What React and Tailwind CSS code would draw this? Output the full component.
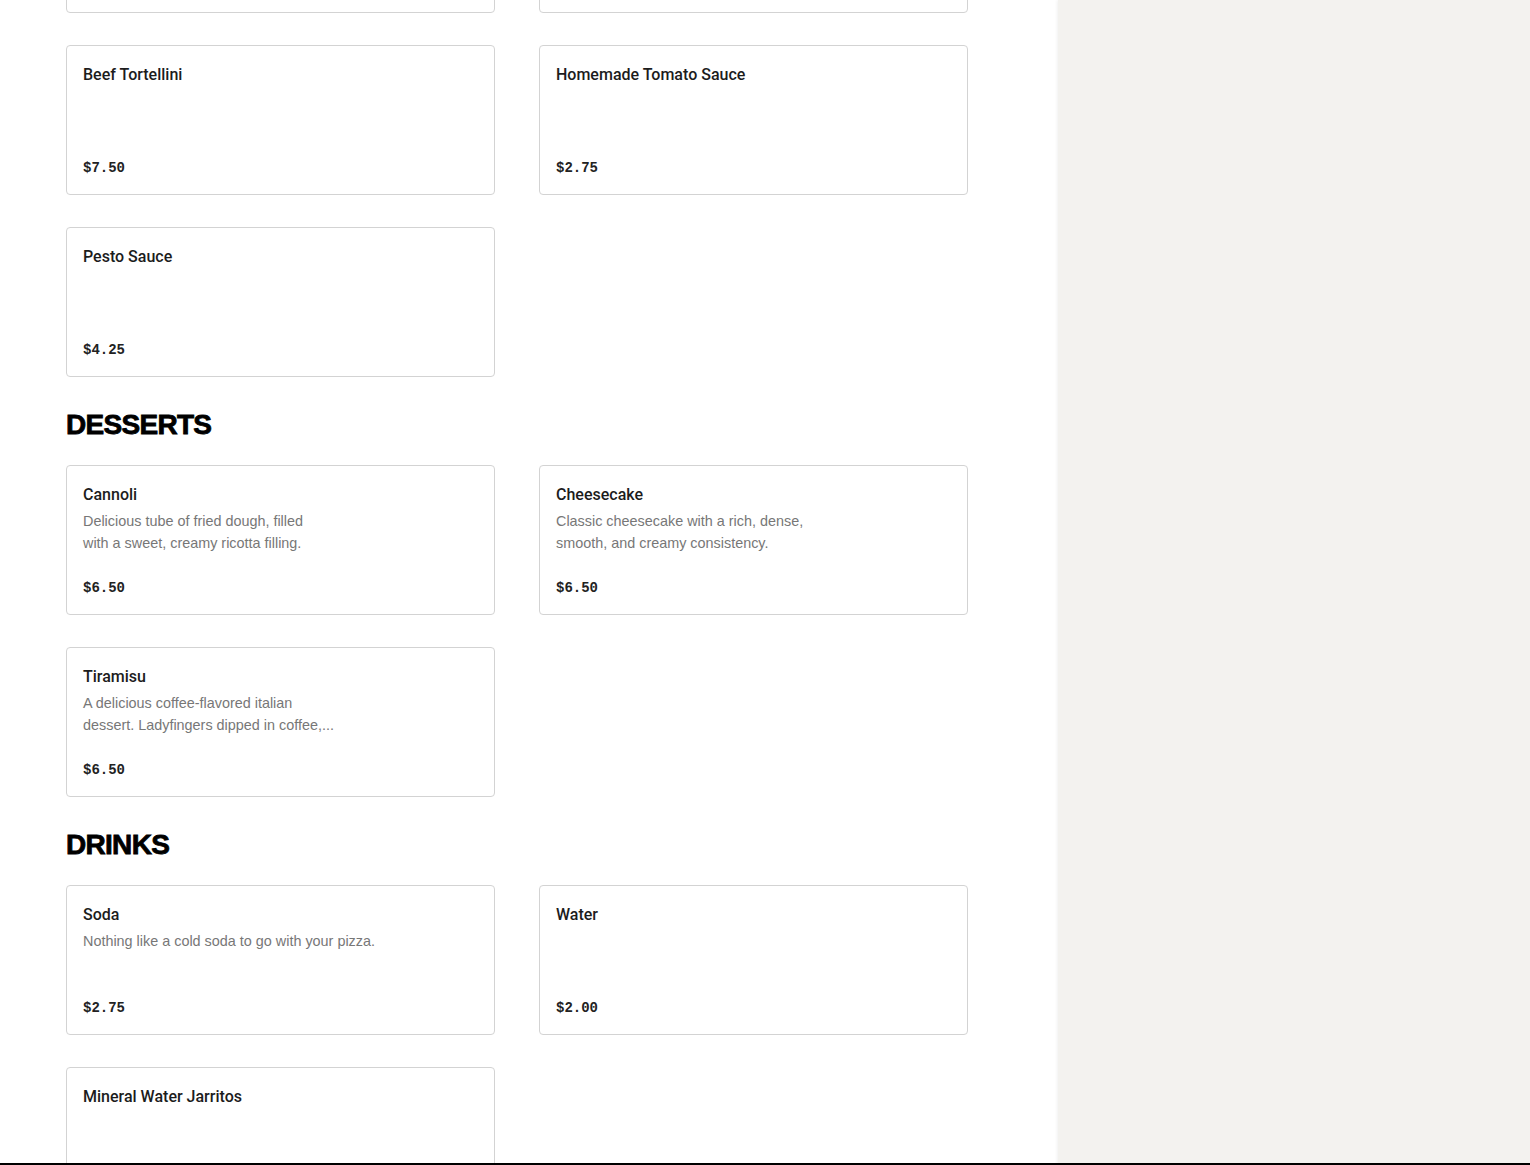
const sections = [
  {
    title: null,
    items: [
      { name: 'Spaghetti', price: '$7.50' },
      { name: 'Fettuccine', price: '$7.50' },
      { name: 'Beef Tortellini', price: '$7.50' },
      { name: 'Homemade Tomato Sauce', price: '$2.75' },
      { name: 'Pesto Sauce', price: '$4.25' },
    ],
  },
  {
    title: 'DESSERTS',
    items: [
      {
        name: 'Cannoli',
        desc: ['Delicious tube of fried dough, filled', 'with a sweet, creamy ricotta filling.'],
        price: '$6.50',
      },
      {
        name: 'Cheesecake',
        desc: ['Classic cheesecake with a rich, dense,', 'smooth, and creamy consistency.'],
        price: '$6.50',
      },
      {
        name: 'Tiramisu',
        desc: ['A delicious coffee-flavored italian', 'dessert. Ladyfingers dipped in coffee,...'],
        price: '$6.50',
      },
    ],
  },
  {
    title: 'DRINKS',
    items: [
      { name: 'Soda', desc: ['Nothing like a cold soda to go with your pizza.'], price: '$2.75' },
      { name: 'Water', price: '$2.00' },
      { name: 'Mineral Water Jarritos', price: '$2.00' },
    ],
  },
]

function MenuCard({ item }) {
  return (
    <div className="flex h-[150px] flex-col rounded-[4px] border border-[#d3d3d3] bg-white px-4 pt-[17px] pb-[14px]">
      <div className="font-['Roboto',sans-serif] text-[16px] leading-6 font-medium text-[#1c1c1c]">{item.name}</div>
      {item.desc && (
        <div className="mt-[3px] text-[14.4px] leading-[22px] text-[#777777]">
          {item.desc.map((line, i) => (
            <div key={i}>{line}</div>
          ))}
        </div>
      )}
      <div className="mt-auto font-['Liberation_Mono',monospace] text-[14px] leading-6 font-bold text-[#222222]">
        {item.price}
      </div>
    </div>
  )
}

export default function App() {
  return (
    <div className="flex h-[1165px] w-full overflow-hidden bg-white font-['Liberation_Sans',Arial,sans-serif]">
      <main className="w-[1058px] shrink-0 pl-[66px]">
        <div className="-mt-[137px] w-[902px]">
          {sections.map((section, idx) => (
            <section key={idx}>
              {section.title && (
                <h2 className="mt-8 mb-6 text-[28px] leading-8 font-black tracking-[-0.7px] text-black [-webkit-text-stroke:0.8px_black]">
                  {section.title}
                </h2>
              )}
              <div className="grid grid-cols-2 gap-x-[44px] gap-y-8">
                {section.items.map((item) => (
                  <MenuCard key={item.name} item={item} />
                ))}
              </div>
            </section>
          ))}
        </div>
      </main>
      <aside className="flex-1 bg-[#f3f2ef] shadow-[-1px_0_3px_rgba(0,0,0,0.06)]" />
      <div className="fixed inset-x-0 bottom-0 h-[2px] bg-black" />
    </div>
  )
}
